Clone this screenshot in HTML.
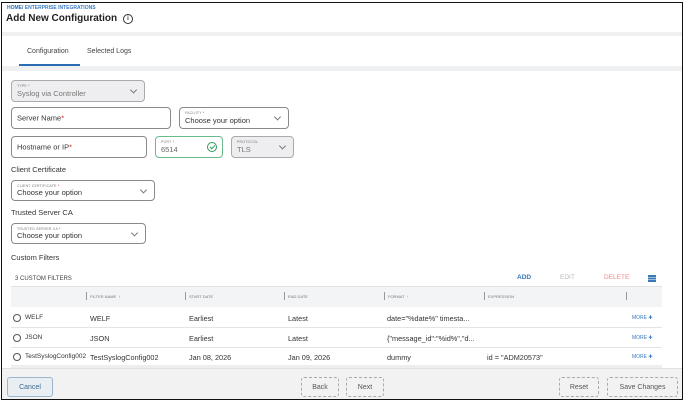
<!DOCTYPE html>
<html><head><style>
*{box-sizing:border-box;margin:0;padding:0}
body{width:684px;height:401px;position:relative;background:#fff;font-family:"Liberation Sans",Arial,sans-serif;color:#333;overflow:hidden}
.a{position:absolute}
.frame{left:1px;top:2px;width:682px;height:398px;border:1.5px solid #111;z-index:10;pointer-events:none}
.band{left:2px;right:2px;background:#eff0f2}
.f{position:absolute;border:1px solid #8a8a8a;border-radius:4px;background:#fff}
.f .l{position:absolute;left:5px;top:3px;font-size:3.5px;color:#777;letter-spacing:.2px}
.f .v{position:absolute;left:5px;bottom:3px;font-size:7.5px;color:#333}
.f .c{position:absolute;right:8px;top:50%;width:5px;height:5px;border-right:1px solid #777;border-bottom:1px solid #777;transform:translateY(-70%) rotate(45deg)}
.big{font-size:7.5px;color:#333;position:absolute;left:5px;top:50%;transform:translateY(-50%)}
.r{color:#d22}
.sec{font-size:7.5px;color:#333}
.th{font-size:4px;color:#777;top:294px}
.sep{position:absolute;width:1px;height:8px;background:#999;top:292px}
.td{font-size:7.3px;color:#333}
.rad{width:8px;height:8px;border:1px solid #555;border-radius:50%}
.more{font-size:5px;color:#3a79b8}
.btn{position:absolute;top:377px;height:20px;border:1px dashed #aaa;border-radius:3px;font-size:7px;color:#555;display:flex;align-items:center;justify-content:center;background:#f2f2f2}
</style></head><body>
<div class="a frame"></div>
<div class="a" style="left:7px;top:5px;font-size:5px;font-weight:bold;color:#2a6db5">HOME/ <span style="color:#3a7cc0">ENTERPRISE INTEGRATIONS</span></div>
<div class="a" style="left:6px;top:13px;font-size:10px;font-weight:bold;color:#222">Add New Configuration</div>
<div class="a" style="left:123px;top:14px;width:10px;height:10px;border:1px solid #333;border-radius:50%;font-size:6px;text-align:center;line-height:8px;font-weight:bold">i</div>
<div class="a band" style="top:32px;height:4px"></div>
<div class="a" style="left:27px;top:48px;font-size:7px;color:#444">Configuration</div>
<div class="a" style="left:87px;top:48px;font-size:7px;color:#444">Selected Logs</div>
<div class="a" style="left:19px;top:64px;width:61px;height:2px;background:#2a6db5"></div>
<div class="a band" style="top:66px;height:5px"></div>

<div class="f" style="left:11px;top:80px;width:134px;height:22px;background:#eeeef0;border-color:#aaa"><div class="l">TYPE *</div><div class="v" style="color:#777">Syslog via Controller</div><div class="c"></div></div>
<div class="f" style="left:11px;top:107px;width:160px;height:22px"><div class="big">Server Name<span class="r">*</span></div></div>
<div class="f" style="left:179px;top:107px;width:110px;height:22px"><div class="l">FACILITY <span class="r">*</span></div><div class="v">Choose your option</div><div class="c"></div></div>
<div class="f" style="left:11px;top:136px;width:136px;height:22px"><div class="big">Hostname or IP<span class="r">*</span></div></div>
<div class="f" style="left:155px;top:136px;width:68px;height:22px;border-color:#6ab98a"><div class="l">PORT <span class="r">*</span></div><div class="v" style="color:#666">6514</div>
<div style="position:absolute;right:5px;top:5px;width:10px;height:10px;border:1.2px solid #2e9a5a;border-radius:50%"></div><div style="position:absolute;right:8px;top:7px;width:3px;height:5px;border-right:1.2px solid #2e9a5a;border-bottom:1.2px solid #2e9a5a;transform:rotate(45deg)"></div></div>
<div class="f" style="left:231px;top:136px;width:63px;height:22px;background:#eeeef0;border-color:#aaa"><div class="l">PROTOCOL</div><div class="v" style="color:#777">TLS</div><div class="c"></div></div>
<div class="a sec" style="left:11px;top:165px">Client Certificate</div>
<div class="f" style="left:11px;top:180px;width:144px;height:21px"><div class="l">CLIENT CERTIFICATE <span class="r">*</span></div><div class="v">Choose your option</div><div class="c"></div></div>
<div class="a sec" style="left:11px;top:208px">Trusted Server CA</div>
<div class="f" style="left:11px;top:223px;width:135px;height:21px"><div class="l">TRUSTED SERVER CA <span class="r">*</span></div><div class="v">Choose your option</div><div class="c"></div></div>
<div class="a sec" style="left:11px;top:253px">Custom Filters</div>

<div class="a" style="left:15px;top:276px;font-size:6px;color:#444">3 CUSTOM FILTERS</div>
<div class="a" style="left:517px;top:274px;font-size:6.5px;color:#3a79b8;font-weight:bold">ADD</div>
<div class="a" style="left:560px;top:274px;font-size:6.5px;color:#bbb">EDIT</div>
<div class="a" style="left:604px;top:274px;font-size:6.5px;color:#e88">DELETE</div>
<div class="a" style="left:648px;top:275px;width:8px;height:1.5px;background:#3a79b8;box-shadow:0 2.5px 0 #3a79b8,0 5px 0 #3a79b8"></div>
<div class="a" style="left:11px;top:286px;width:651px;height:21px;background:#f3f4f6;border-top:1.5px solid #e2e2e2"></div>
<div class="sep" style="left:86px"></div><div class="a th" style="left:90px">FILTER NAME &nbsp;↑</div>
<div class="sep" style="left:185px"></div><div class="a th" style="left:189px">START DATE</div>
<div class="sep" style="left:284px"></div><div class="a th" style="left:288px">END DATE</div>
<div class="sep" style="left:384px"></div><div class="a th" style="left:388px">FORMAT &nbsp;↑</div>
<div class="sep" style="left:484px"></div><div class="a th" style="left:488px">EXPRESSION</div>
<div class="sep" style="left:626px"></div>

<div class="a" style="left:11px;top:327px;width:651px;height:1px;background:#e4e4e4"></div>
<div class="a" style="left:11px;top:347px;width:651px;height:1px;background:#e4e4e4"></div>
<div class="a" style="left:11px;top:365px;width:651px;height:3px;background:#eee"></div>

<div class="a rad" style="left:13px;top:314px"></div><div class="a td" style="left:25px;top:314px;font-size:6.5px">WELF</div>
<div class="a td" style="left:90px;top:314px">WELF</div><div class="a td" style="left:189px;top:314px">Earliest</div><div class="a td" style="left:288px;top:314px">Latest</div><div class="a td" style="left:387px;top:314px">date="%date%" timesta...</div><div class="a more" style="left:632px;top:315px">MORE ✚</div>
<div class="a rad" style="left:13px;top:334px"></div><div class="a td" style="left:25px;top:334px;font-size:6.5px">JSON</div>
<div class="a td" style="left:90px;top:334px">JSON</div><div class="a td" style="left:189px;top:334px">Earliest</div><div class="a td" style="left:288px;top:334px">Latest</div><div class="a td" style="left:387px;top:334px">{"message_id":"%id%","d...</div><div class="a more" style="left:632px;top:335px">MORE ✚</div>
<div class="a rad" style="left:13px;top:353px"></div><div class="a td" style="left:25px;top:353px;font-size:6.5px;width:62px;overflow:hidden;white-space:nowrap">TestSyslogConfig002</div>
<div class="a td" style="left:90px;top:353px">TestSyslogConfig002</div><div class="a td" style="left:189px;top:353px">Jan 08, 2026</div><div class="a td" style="left:288px;top:353px">Jan 09, 2026</div><div class="a td" style="left:387px;top:353px">dummy</div><div class="a td" style="left:487px;top:353px">id = "ADM20573"</div><div class="a more" style="left:632px;top:354px">MORE ✚</div>

<div class="a" style="left:2px;top:368px;width:680px;height:32px;background:#f2f2f3;border-top:1px solid #e0e0e0"></div>
<div class="btn" style="left:7px;width:46px;border:1px solid #9bb6cf;background:#e9eef3;color:#3a6a96">Cancel</div>
<div class="btn" style="left:301px;width:38px">Back</div>
<div class="btn" style="left:346px;width:38px">Next</div>
<div class="btn" style="left:559px;width:40px">Reset</div>
<div class="btn" style="left:607px;width:71px">Save Changes</div>
</body></html>
